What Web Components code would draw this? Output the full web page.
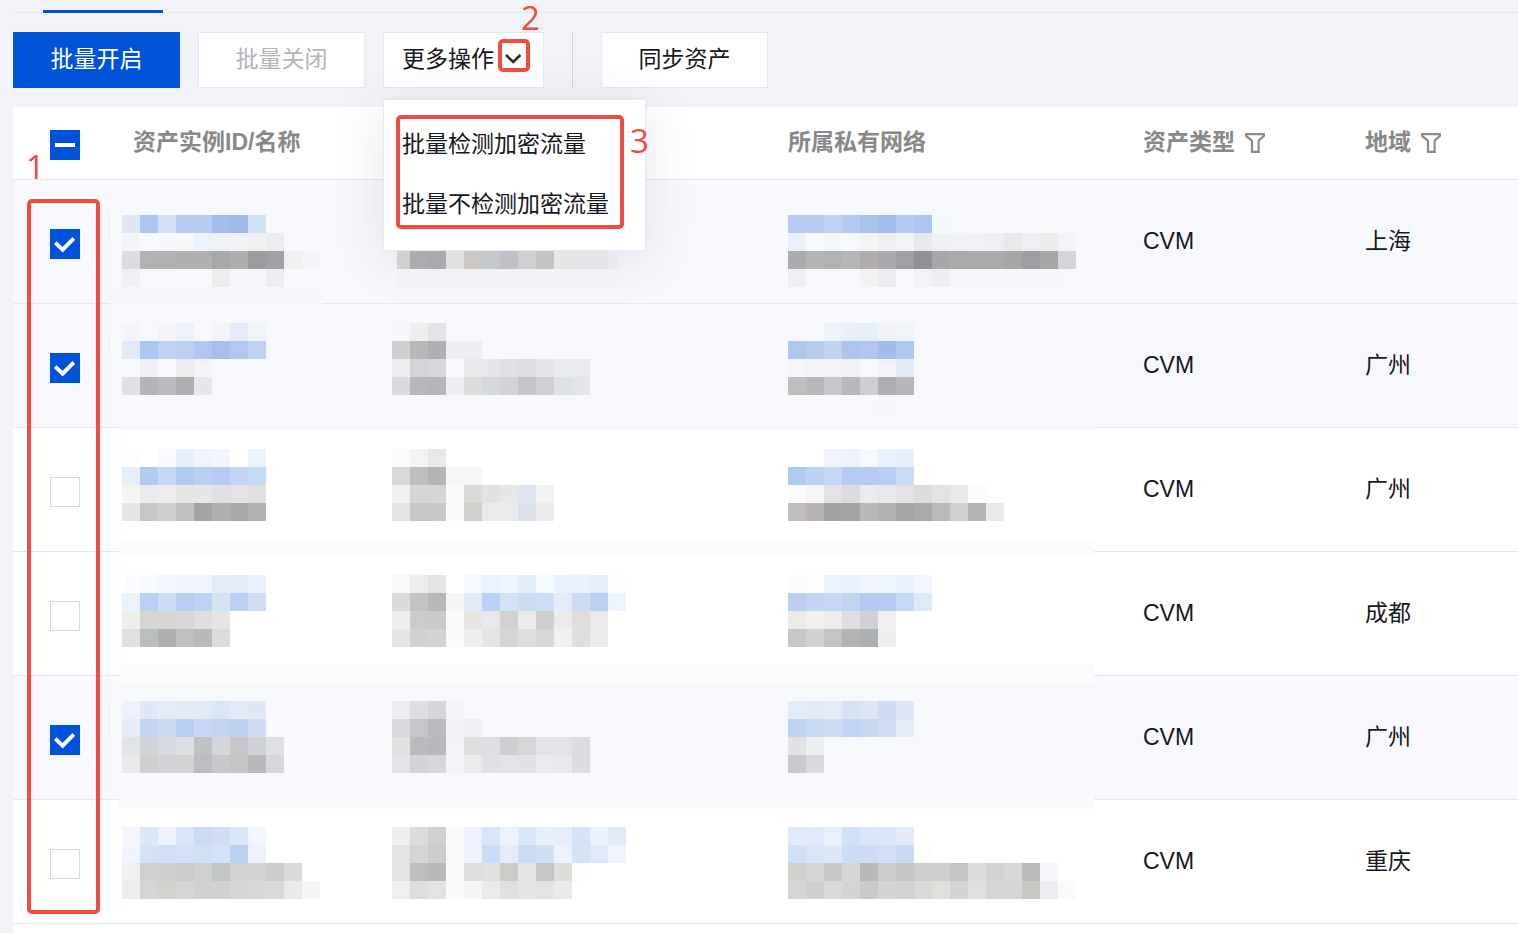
<!DOCTYPE html>
<html lang="zh-CN">
<head>
  <meta charset="UTF-8">
  <meta name="viewport" content="width=device-width, initial-scale=1.0">
  <title>资产列表</title>
  <style>
    body {
      margin: 0;
      background: #f2f3f8;
      color: #16181d;
      font-family: "Liberation Sans", "Noto Sans CJK SC", sans-serif;
      font-size: 23px;
      line-height: 32px;
      overflow-x: hidden;
    }
  </style>
</head>
<body>
  <asset-page>
    <tab-strip slot="tabs"></tab-strip>

    <tool-bar slot="toolbar">
      <tea-button variant="primary">批量开启</tea-button>
      <tea-button disabled>批量关闭</tea-button>
      <more-menu label="更多操作">
        <menu-item>批量检测加密流量</menu-item>
        <menu-item>批量不检测加密流量</menu-item>
      </more-menu>
      <tool-divider></tool-divider>
      <tea-button>同步资产</tea-button>
    </tool-bar>

    <asset-table slot="table"></asset-table>

    <mosaic-layer slot="overlay"></mosaic-layer>
    <note-mark slot="overlay" style="--x: 27px; --y: 199px; --w: 73px; --h: 715px"></note-mark>
    <note-mark slot="overlay" style="--x: 498px; --y: 39px; --w: 32px; --h: 33px"></note-mark>
    <note-mark slot="overlay" style="--x: 396px; --y: 115px; --w: 228px; --h: 114px"></note-mark>
    <note-number slot="overlay" style="--x: 26px; --y: 151px">1</note-number>
    <note-number slot="overlay" style="--x: 521px; --y: 2px">2</note-number>
    <note-number slot="overlay" style="--x: 630px; --y: 125px">3</note-number>
  </asset-page>

  <script>
    class AssetPage extends HTMLElement {
      connectedCallback() {
        this.attachShadow({ mode: "open" });
        this.shadowRoot.innerHTML = `
          <style>
            :host {
              display: flex;
              flex-direction: column;
              position: relative;
              min-height: 100vh;
              padding-left: 13px;
              box-sizing: border-box;
            }

            main {
              flex: 1;
              background: #fff;
            }
          </style>
          <slot name="tabs"></slot>
          <slot name="toolbar"></slot>
          <main><slot name="table"></slot></main>
          <slot name="overlay"></slot>
        `;
      }
    }

    class TabStrip extends HTMLElement {
      connectedCallback() {
        this.attachShadow({ mode: "open" });
        this.shadowRoot.innerHTML = `
          <style>
            :host {
              display: flex;
              align-items: flex-end;
              height: 12px;
              padding-left: 30px;
              border-bottom: 1px solid #e5e7ed;
            }

            .active {
              width: 120px;
              height: 3px;
              margin-bottom: -1px;
              background: #0052d9;
            }
          </style>
          <div class="active"></div>
        `;
      }
    }

    class ToolBar extends HTMLElement {
      connectedCallback() {
        this.attachShadow({ mode: "open" });
        this.shadowRoot.innerHTML = `
          <style>
            :host {
              display: flex;
              gap: 18px;
              padding: 19px 0;
            }
          </style>
          <slot></slot>
        `;
      }
    }

    class ToolDivider extends HTMLElement {
      connectedCallback() {
        this.attachShadow({ mode: "open" });
        this.shadowRoot.innerHTML = `
          <style>
            :host {
              display: block;
              width: 1px;
              margin: 0 10px;
              background: #d5d8e0;
            }
          </style>
        `;
      }
    }

    class TeaButton extends HTMLElement {
      connectedCallback() {
        const primary = this.getAttribute("variant") === "primary";
        this.attachShadow({ mode: "open" });
        this.shadowRoot.innerHTML = `
          <style>
            :host {
              display: block;
            }

            button {
              min-width: 167px;
              height: 56px;
              padding: 0 20px 2px;
              border: 1px solid #e5e8f0;
              background: #fff;
              color: inherit;
              font: inherit;
              cursor: pointer;
            }

            .primary {
              background: #0052d9;
              border-color: #0052d9;
              color: #fff;
            }

            button:disabled {
              color: #b4b4b6;
              cursor: not-allowed;
            }
          </style>
          <button type="button" class="${primary ? "primary" : ""}" ${this.hasAttribute("disabled") ? "disabled" : ""}><slot></slot></button>
        `;
      }
    }

    class MoreMenu extends HTMLElement {
      connectedCallback() {
        this.attachShadow({ mode: "open" });
        this.shadowRoot.innerHTML = `
          <style>
            :host {
              display: block;
              position: relative;
            }

            .trigger {
              display: flex;
              align-items: center;
              gap: 10px;
              min-width: 161px;
              height: 56px;
              padding: 0 18px 2px;
              border: 1px solid #e5e8f0;
              background: #fff;
              color: inherit;
              font: inherit;
              cursor: pointer;
            }

            svg {
              width: 18px;
              height: 10px;
              fill: none;
              stroke: #2b2d33;
              stroke-width: 2.6;
            }

            .menu {
              position: absolute;
              top: 67px;
              left: 0;
              z-index: 1;
              min-width: 263px;
              padding: 15px 0;
              box-sizing: border-box;
              border: 1px solid #e5e8f0;
              background: #fff;
              box-shadow: 0 8px 48px rgba(54, 58, 80, 0.12);
            }

            .menu[hidden] {
              display: none;
            }
          </style>
          <button type="button" class="trigger" aria-haspopup="menu" aria-expanded="true">
            ${this.getAttribute("label")}
            <svg viewBox="0 0 18 10" aria-hidden="true"><path d="M2 1l7.200 7 7.200-7" /></svg>
          </button>
          <div class="menu" role="menu"><slot></slot></div>
        `;

        const trigger = this.shadowRoot.querySelector(".trigger");
        const menu = this.shadowRoot.querySelector(".menu");
        trigger.addEventListener("click", () => {
          menu.hidden = !menu.hidden;
          trigger.setAttribute("aria-expanded", String(!menu.hidden));
        });
      }
    }

    class MenuItem extends HTMLElement {
      connectedCallback() {
        this.attachShadow({ mode: "open" });
        this.shadowRoot.innerHTML = `
          <style>
            :host {
              display: block;
            }

            button {
              width: 100%;
              height: 60px;
              padding: 0 18px 2px;
              border: 0;
              background: none;
              color: inherit;
              font: inherit;
              text-align: left;
              white-space: nowrap;
              cursor: pointer;
            }
          </style>
          <button type="button" role="menuitem"><slot></slot></button>
        `;
      }
    }

    class CheckBox extends HTMLElement {
      connectedCallback() {
        this.attachShadow({ mode: "open" });
        this.shadowRoot.innerHTML = `
          <style>
            :host {
              display: block;
              padding-top: 6px;
            }

            label {
              display: grid;
              width: 30px;
              height: 30px;
            }

            input, svg {
              grid-area: 1 / 1;
              width: 30px;
              height: 30px;
              margin: 0;
              box-sizing: border-box;
            }

            input {
              appearance: none;
              border: 1px solid #d5d8e3;
              background: #fff;
            }

            input:checked, input:indeterminate {
              border-color: #0052d9;
              background: #0052d9;
            }

            svg {
              fill: none;
              stroke: #fff;
              stroke-width: 4;
              pointer-events: none;
            }

            path {
              display: none;
            }

            input:checked ~ svg .tick,
            input:indeterminate ~ svg .dash {
              display: block;
            }
          </style>
          <label>
            <input type="checkbox" aria-label="${this.getAttribute("label")}">
            <svg viewBox="0 0 30 30" aria-hidden="true">
              <path class="tick" d="M5.3 13.6l7.3 7L23.8 9.4" />
              <path class="dash" d="M5 15h20" />
            </svg>
          </label>
        `;
        const input = this.shadowRoot.querySelector("input");
        input.checked = this.getAttribute("state") === "on";
        input.indeterminate = this.getAttribute("state") === "some";
      }
    }

    class FilterHead extends HTMLElement {
      connectedCallback() {
        this.attachShadow({ mode: "open" });
        this.shadowRoot.innerHTML = `
          <style>
            :host {
              display: flex;
              align-items: center;
              gap: 10px;
            }

            button {
              display: flex;
              padding: 2px 0 0;
              border: 0;
              background: none;
              cursor: pointer;
            }

            svg {
              width: 20px;
              height: 20px;
              fill: none;
              stroke: #8c8c8c;
              stroke-width: 2.2;
            }
          </style>
          <slot></slot>
          <button type="button" aria-label="筛选">
            <svg viewBox="0 0 20 20" aria-hidden="true"><path d="M1.1 1.1h17.8v1.8l-5.3 4.9V18.900H7V7.8L1.100 2.900z" /></svg>
          </button>
        `;
      }
    }

    const ASSETS = [
      { type: "CVM", region: "上海", checked: true },
      { type: "CVM", region: "广州", checked: true },
      { type: "CVM", region: "广州", checked: false },
      { type: "CVM", region: "成都", checked: false },
      { type: "CVM", region: "广州", checked: true },
      { type: "CVM", region: "重庆", checked: false },
    ];

    class AssetTable extends HTMLElement {
      connectedCallback() {
        const rows = ASSETS.map((asset, i) => `
          <tr class="${asset.checked ? "selected" : ""}">
            <td class="pick"><check-box label="选择第${i + 1}行" state="${asset.checked ? "on" : "off"}"></check-box></td>
            <td></td>
            <td></td>
            <td></td>
            <td>${asset.type}</td>
            <td>${asset.region}</td>
          </tr>
        `).join("");

        this.attachShadow({ mode: "open" });
        this.shadowRoot.innerHTML = `
          <style>
            :host {
              display: block;
            }

            table {
              width: 100%;
              table-layout: fixed;
              border-spacing: 0;
            }

            .c-pick { width: 100px; }
            .c-name { width: 270px; }
            .c-ip { width: 385px; }
            .c-vpc { width: 355px; }
            .c-type { width: 222px; }

            th, td {
              padding: 0 0 2px 20px;
              box-sizing: border-box;
              border-bottom: 1px solid #e5e7ed;
              text-align: left;
              vertical-align: middle;
            }

            th {
              height: 73px;
              color: #888;
              font-weight: bold;
            }

            td {
              height: 124px;
            }

            .pick {
              padding-left: 37px;
            }

            .selected {
              background: #f7f8fc;
            }
          </style>
          <table>
            <colgroup>
              <col class="c-pick"><col class="c-name"><col class="c-ip"><col class="c-vpc"><col class="c-type"><col>
            </colgroup>
            <thead>
              <tr>
                <th class="pick"><check-box label="全选" state="some"></check-box></th>
                <th>资产实例ID/名称</th>
                <th></th>
                <th>所属私有网络</th>
                <th><filter-head>资产类型</filter-head></th>
                <th><filter-head>地域</filter-head></th>
              </tr>
            </thead>
            <tbody>${rows}</tbody>
          </table>
        `;
      }
    }

    // Flat patches that run across the row borders: x, y, width, height, colour
    const PATCHES = [
      [110, 287, 212, 18, "f6f7fb"],
      [119, 426, 975, 5, "f7f8fc"],
      [119, 539, 975, 18, "fcfcfc"],
      [119, 665, 975, 18, "fbfbfb"],
      [119, 791, 975, 18, "f9fafc"],
      [397, 251, 13, 18, "d0d0d2"],
      [397, 269, 220, 18, "f1f2f5"],
      [608, 251, 9, 18, "e8e9ee"],
    ];

    // Runs of 18px blocks: x, y, colours from left to right ("-" leaves a gap)
    const CELL = 18;
    const RUNS = [
      [122, 215, "dfe7f6 abc6ef d3e1f4 b6caf2 b6caf2 a1beef a0bbeb d1e1f4"],
      [122, 233, "f3f4f7 - f6f7fa f6f7fa ebf2fb f0f1f5 f0f1f5 f0f0f0 ebecef"],
      [122, 251, "dcdde0 b1b3b5 b2b2b4 b0b0af b0b0b3 a7a8aa aeaeae 9c9da1 9fa0a4 f0f0f1 f4f4f8"],
      [122, 269, "eff0f4 - - - - ebecec f5f6f9 f6f7fa ecedf0"],
      [122, 323, "f4f5f9 - f3f4f9 edf1fa - f3f4f9 e4eaf7 f0f4fa"],
      [122, 341, "e1e8f6 abc6ef bfd2f2 bcd0f2 b2c6ef a7beee b1c9f0 bfd2f3"],
      [122, 359, "- eff0f3 - ececed f3f4f7"],
      [122, 377, "e0e1e3 b7b4b8 bbbcbe b0b0b2 e6e7ea"],
      [122, 449, "fbfdff - f8faff e5eefb eef3fd f0f5ff - edf3fd"],
      [122, 467, "e8effa b1caf2 c6d8f5 b1caf2 bacff2 b6caf3 c5d4f4 c5daf5"],
      [122, 485, "f4f4f4 eaeaea ececec e7e8e5 e7e7e4 e0e2e1 e3e3e3 e0e0e0"],
      [122, 503, "e7e6e4 c7c7c7 d0cfcd c2c0be a2a4a6 afb1b0 a7a9ab b1b1b1"],
      [122, 575, "fafcff f8faff f3f7ff f1f5ff f0f5ff e4ecfa e3ebfa e9f1fc"],
      [122, 593, "ebf2fb bbd0f4 cdddf6 b7cef2 bed2f3 d6e3f5 bbd0f3 cfdef6"],
      [122, 611, "eeeeec d5d7d5 d5d5d5 d6d7d9 dfdfdf e5e5e5"],
      [122, 629, "e2dfdc babec1 b0b0b0 bfc0bf bcbab6 dbdcdd"],
      [122, 701, "edf1fb e0e7f6 e3eaf8 e2eaf6 e1e9f6 dae5f5 e1e9f5 e0e7f6"],
      [122, 719, "e6ebf6 c3d5f3 cadaf3 b7cdf1 c7d7f4 c2d4f1 bed1f1 d0dcf4"],
      [122, 737, "e2e3e5 d3d4d8 d9dadf dee0e0 c0c1c5 d5d6db c6c6c8 d0d1d4 dee0e5"],
      [122, 755, "e8e9ea cfcfd2 d2d3d5 d2d2d2 bcbdc1 c7c8ca c6c3c7 b8b8ba d7d8dd"],
      [122, 827, "f3f7fd dbe8f9 edf2fd d8e6f8 cbdbf7 d2def8 dce9fa f3f7ff"],
      [122, 845, "f1f5ff d4e1f8 d2e0f7 d5e1fa d0e1f6 d5e3f6 bbd1f3 edf2fd"],
      [122, 863, "f0efed cfd1cf cfcfcf caccce d1cfcf c1c5c6 d2d2d2 d3d3d3 cbccce dbdbdb"],
      [122, 881, "ededed d5d5d5 d3d2ce d3d5d7 d1d1d1 d0d2d1 d6d6d6 d7d8d7 d9dbd9 ebe9e7 f5f5f5"],

      [410, 251, "abacae a9aaae dfe0e1 cbc8c5 c4c7cc c0c1c6 ced0d1 c2c3c5 e6e7e9 e6e7e9 e6e7eb"],
      [392, 323, "f5f7fb eeeeef e2e4e8"],
      [392, 341, "cfcfd1 b7b8ba afb0b4 edeef2 edeef2"],
      [392, 359, "ebeced d4d5d9 d7d8dc - e8e8ea e6e7eb e0e1e3 dddee3 e5e6ea e9eaef e9eaee"],
      [392, 377, "dadbdc b7b8bd b5b6ba edeef3 dedddc d5d9de d2d3d7 c4c4c9 d0d0d2 dee3e5 e4e5e7"],
      [392, 449, "fbfbfb f3f3f3 e9e9e9"],
      [392, 467, "dad8d8 bebebe b2b4b6 f6f6f6 f6f6f6"],
      [392, 485, "f0f0ee d5d5d5 d4d6d8 fafafa dbdad8 e2e2e2 e6e7e9 dee4f2 f0f2f4"],
      [392, 503, "e3e3e1 c7c7c7 c8c8c8 fafafa d0d0cd ebebe9 eaebed dce0e9 ebebeb"],
      [392, 575, "f8f8f8 ededed e5e5e5 - f5f9ff ebf1fd eff5ff e2edf9 f5faff e9f1fd e8effd e5edfa fbfdff"],
      [392, 593, "dddada c3c3c3 b6b8b9 f5f5f5 e1e8f8 bbd0f5 d5e2f6 cdddf6 cedef6 e3eafa cddbf7 bad1f3 ecf4fe"],
      [392, 611, "eeedeb cbcbcb c8cacc fafafa e7e5e3 e6e8ea d2d2d2 e8ebea cecece ebebeb e0dedc e8eaeb"],
      [392, 629, "e6e6e6 d1d1ce d3d3d3 fafafa f0eeec e3e4e6 d5d5d5 dedede d7d7d7 f0f0f0 dedfdc eaeceb"],
      [392, 701, "ebecef dddedf d5d6db f4f5fa"],
      [392, 719, "d9d9db c5c6ca b9bbc0 f0f2f5 eeeff2"],
      [392, 737, "e1e1e2 babbc0 b8b9be f1f3f7 dedede dedfe6 cfcfd2 d6d7d9 e2e3e8 e2e3e7 dcdde0"],
      [392, 755, "e3e4e9 d3d4d5 d6d7dc f1f3f7 eaeaea e0e1e6 e4e2e8 e1e1e6 e9eaef e8e9ee dcdddf"],
      [392, 827, "eeeeee dddcd9 cfd0d2 fafafa ecf1fd d9e6f9 ecf1fd dbe7fa e7effc e6edfb d5e2fb e8f1fc e2eafa"],
      [392, 845, "e3e3e3 d3d6d4 cdcdcd fafafa edf2fd cbddf6 e4ebfa cadcf6 cfdff6 ecf1fd d6e3f7 e0e9fa eef3fd"],
      [392, 863, "e4e3df bebec0 b7b9bb fafafa dfdedc e0e1e3 ccccc9 e3e3e3 c5c7c6 ddddda fbfdff"],
      [392, 881, "efefef dedede e3e3e3 fafafa f6f5f3 eaeaea e0e0e0 e6e6e6 e3e3e3 e9e9e7"],

      [788, 215, "b6caf3 b8ccf1 bfd2f3 b2c9f2 a8c1ef a2bdee b3cbf4 adc5ef f3f8fd"],
      [788, 233, "ebeffa f5f8fc f4f7fb - f3f4f8 f0f0f3 f3f4f8 e8e9ec eff0f3 f0f2f5 f0f1f5 eeeff2 e6e8eb eeeff2 ebebec f2f3f8"],
      [788, 251, "ababad b5b5b7 b2b3b4 b6b7b9 b2adad a8a9af 9fa0a3 929197 a6a7a8 a8aaab aaabad aaaaac a5a7a5 9e9da3 a6a6a8 d4d5da"],
      [788, 269, "eeeff2 - - - f3f2f3 ebecef - f2f3f6 edeef2 f5f6fa f5f6fa f5f6fa f5f6fa f5f6fa f5f6fa"],
      [788, 323, "- - edf2fa e9eff9 e6eef9 f1f2f7 eff4fa"],
      [788, 341, "aec7ef b7cbef c1d3f0 adc4ef b2c5ee a2bded abc8ef"],
      [788, 359, "f4f6fb f2f3f4 f3f4f8 f1f2f5 - f3f4f8 e4e8f2"],
      [788, 377, "bebebf b7b8b9 c7c7c9 b7b8ba cdced2 aeafb0 b7b7bb"],
      [788, 395, "- - - - - f5f6fa"],
      [788, 449, "- - eef3fe ebf2fd f4f8ff e9f0fc e7eefc"],
      [788, 467, "b1caf0 bdd1f3 c7d7f6 b6caf3 b7cbf4 b9cef2 cadbf5"],
      [788, 485, "fbfbfb f6f6f6 e3e3e3 dcdcdc ebebeb e6e9e8 e3e3e3 dddddd e3e3e3 e9e9e9 fcfcfc"],
      [788, 503, "bfbebc b9b4b3 9fa3a5 a6a4a1 bbb9b6 b0b2b4 a4a6a8 a8abaa bbbbbb cfd0d2 b4b4b4 e8e9eb"],
      [788, 575, "fafcff fbfdff edf3fd eaf1fd eef3fd eef4fd e9f2fc f2f6ff"],
      [788, 593, "bbcff3 c3d4f3 c6d8f5 c1d5f2 b5caf3 b5cbf3 c5daf5 deeaf8"],
      [788, 611, "ebebe9 f0f0f0 ededed dedede d0d1d3 f0f0f0"],
      [788, 629, "c9c7c5 d2d1ce c4c4c4 b5b2b2 acb0b3 eeeeee"],
      [788, 701, "e4ebf8 e3eaf7 e4ebf6 d7e3f5 e0e5f5 d0dcf6 dce6f7"],
      [788, 719, "bfd3f3 c9daf4 cedcf5 c1d4f3 c7d8f3 d1def6 e4ebf7"],
      [788, 737, "e2e2e4 edeef2"],
      [788, 755, "cacacc d9dade"],
      [788, 827, "e2e9fa e0e9fb e8f0fb d1e1f7 dbe6f8 dae6f9 e3e9fa"],
      [788, 845, "d1dff7 d8e5f9 dee8fa cdddf7 d0dcf7 d4dff6 c8daf4 fbfdff"],
      [788, 863, "d0d0cd d5d7d6 c7c9c8 d6d6d6 b9b9b9 cccbc8 c5c5c5 cdcfce cdcfce c4c4c4 dcdcda d2d2d2 d7d9d8 bdbbb9 f4f6f9"],
      [788, 881, "d5d5d3 d1cfcd d8d9db d4d4d4 c9cbca d4d4d4 d1d3d2 dadada e0e0dd d4d4d4 e0e0dd d6d6d6 d5d6d8 c9c7c3 ecedf0 fafafa"],
    ];

    class MosaicLayer extends HTMLElement {
      connectedCallback() {
        const rect = (x, y, w, h, color) =>
          `<rect x="${x}" y="${y}" width="${w}" height="${h}" fill="#${color}" />`;

        let shapes = PATCHES.map((p) => rect(...p)).join("");
        RUNS.forEach(([x, y, colors]) => {
          colors.split(" ").forEach((color, i) => {
            if (color !== "-") {
              shapes += rect(x + i * CELL, y, CELL, CELL, color);
            }
          });
        });

        this.attachShadow({ mode: "open" });
        this.shadowRoot.innerHTML = `
          <style>
            :host {
              position: absolute;
              top: 0;
              left: 0;
              z-index: 2;
              pointer-events: none;
            }

            svg {
              display: block;
              shape-rendering: crispEdges;
            }
          </style>
          <svg width="1100" height="900" aria-hidden="true">${shapes}</svg>
        `;
      }
    }

    class NoteMark extends HTMLElement {
      connectedCallback() {
        this.attachShadow({ mode: "open" });
        this.shadowRoot.innerHTML = `
          <style>
            :host {
              position: absolute;
              left: var(--x);
              top: var(--y);
              z-index: 3;
              width: var(--w);
              height: var(--h);
              box-sizing: border-box;
              border: 4px solid #f04c3f;
              border-radius: 5px;
              pointer-events: none;
            }
          </style>
        `;
      }
    }

    class NoteNumber extends HTMLElement {
      connectedCallback() {
        this.attachShadow({ mode: "open" });
        this.shadowRoot.innerHTML = `
          <style>
            :host {
              position: absolute;
              left: var(--x);
              top: var(--y);
              z-index: 3;
              color: #f24a3d;
              font-family: "Open Sans", "Noto Sans", sans-serif;
              font-size: 33px;
              font-weight: 400;
              line-height: 32px;
              pointer-events: none;
            }
          </style>
          <slot></slot>
        `;
      }
    }

    customElements.define("asset-page", AssetPage);
    customElements.define("tab-strip", TabStrip);
    customElements.define("tool-bar", ToolBar);
    customElements.define("tool-divider", ToolDivider);
    customElements.define("tea-button", TeaButton);
    customElements.define("more-menu", MoreMenu);
    customElements.define("menu-item", MenuItem);
    customElements.define("check-box", CheckBox);
    customElements.define("filter-head", FilterHead);
    customElements.define("asset-table", AssetTable);
    customElements.define("mosaic-layer", MosaicLayer);
    customElements.define("note-mark", NoteMark);
    customElements.define("note-number", NoteNumber);
  </script>
</body>
</html>
